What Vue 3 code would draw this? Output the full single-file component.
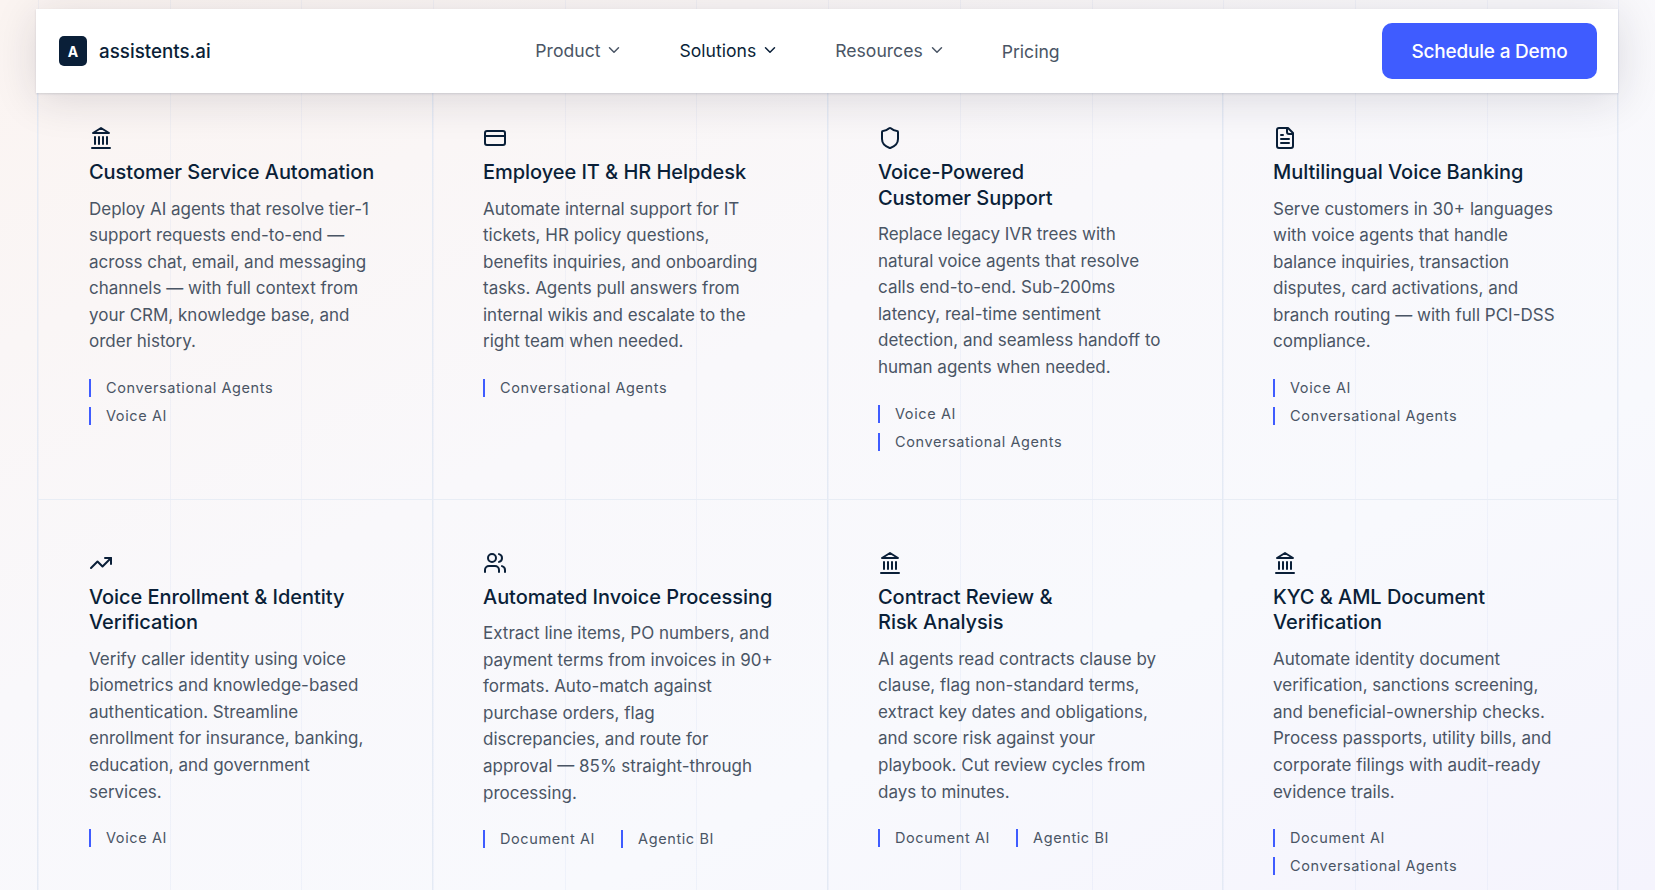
<script setup>
const nav = [
  { label: 'Product', caret: true },
  { label: 'Solutions', caret: true, active: true },
  { label: 'Resources', caret: true },
  { label: 'Pricing' },
]

const cards = [
  {
    icon: 'bank',
    title: 'Customer Service Automation',
    text: 'Deploy AI agents that resolve tier-1\nsupport requests end-to-end —\nacross chat, email, and messaging\nchannels — with full context from\nyour CRM, knowledge base, and\norder history.',
    tags: ['Conversational Agents', 'Voice AI'],
    stack: true,
  },
  {
    icon: 'card',
    title: 'Employee IT & HR Helpdesk',
    text: 'Automate internal support for IT\ntickets, HR policy questions,\nbenefits inquiries, and onboarding\ntasks. Agents pull answers from\ninternal wikis and escalate to the\nright team when needed.',
    tags: ['Conversational Agents'],
  },
  {
    icon: 'shield',
    title: 'Voice-Powered\nCustomer Support',
    text: 'Replace legacy IVR trees with\nnatural voice agents that resolve\ncalls end-to-end. Sub-200ms\nlatency, real-time sentiment\ndetection, and seamless handoff to\nhuman agents when needed.',
    tags: ['Voice AI', 'Conversational Agents'],
    stack: true,
  },
  {
    icon: 'doc',
    title: 'Multilingual Voice Banking',
    text: 'Serve customers in 30+ languages\nwith voice agents that handle\nbalance inquiries, transaction\ndisputes, card activations, and\nbranch routing — with full PCI-DSS\ncompliance.',
    tags: ['Voice AI', 'Conversational Agents'],
    stack: true,
  },
  {
    icon: 'trend',
    title: 'Voice Enrollment & Identity\nVerification',
    text: 'Verify caller identity using voice\nbiometrics and knowledge-based\nauthentication. Streamline\nenrollment for insurance, banking,\neducation, and government\nservices.',
    tags: ['Voice AI'],
  },
  {
    icon: 'users',
    title: 'Automated Invoice Processing',
    text: 'Extract line items, PO numbers, and\npayment terms from invoices in 90+\nformats. Auto-match against\npurchase orders, flag\ndiscrepancies, and route for\napproval — 85% straight-through\nprocessing.',
    tags: ['Document AI', 'Agentic BI'],
  },
  {
    icon: 'bank',
    title: 'Contract Review &\nRisk Analysis',
    text: 'AI agents read contracts clause by\nclause, flag non-standard terms,\nextract key dates and obligations,\nand score risk against your\nplaybook. Cut review cycles from\ndays to minutes.',
    tags: ['Document AI', 'Agentic BI'],
  },
  {
    icon: 'bank',
    title: 'KYC & AML Document\nVerification',
    text: 'Automate identity document\nverification, sanctions screening,\nand beneficial-ownership checks.\nProcess passports, utility bills, and\ncorporate filings with audit-ready\nevidence trails.',
    tags: ['Document AI', 'Conversational Agents'],
    stack: true,
  },
]
</script>

<template>
  <div class="page">
    <header class="nav">
      <div class="brand">
        <span class="logo">A</span>
        <span class="brandName">assistents.ai</span>
      </div>
      <nav class="links">
        <a v-for="item in nav" :key="item.label" class="link" :class="{ active: item.active, plain: !item.caret }">
          {{ item.label }}
          <svg v-if="item.caret" class="caret" viewBox="0 0 24 24" fill="none" stroke="currentColor" stroke-width="2" stroke-linecap="round" stroke-linejoin="round">
            <path d="m6 9 6 6 6-6" />
          </svg>
        </a>
      </nav>
      <button class="demo">Schedule a Demo</button>
    </header>

    <main class="grid">
      <article v-for="card in cards" :key="card.title" class="card">
        <svg class="icon" viewBox="0 0 24 24" fill="none" stroke="currentColor" stroke-width="2" stroke-linecap="round" stroke-linejoin="round">
          <template v-if="card.icon === 'bank'">
            <path d="M3 22h18M6 18v-7M10 18v-7M14 18v-7M18 18v-7M12 2l8 5H4z" />
          </template>
          <template v-else-if="card.icon === 'card'">
            <rect x="2" y="5" width="20" height="14" rx="2" />
            <path d="M2 10h20" />
          </template>
          <template v-else-if="card.icon === 'shield'">
            <path d="M20 13c0 5-3.5 7.5-7.66 8.95a1 1 0 0 1-.67-.01C7.5 20.5 4 18 4 13V6a1 1 0 0 1 1-1c2 0 4.5-1.2 6.24-2.72a1.17 1.17 0 0 1 1.52 0C14.51 3.81 17 5 19 5a1 1 0 0 1 1 1z" />
          </template>
          <template v-else-if="card.icon === 'doc'">
            <path d="M15 2H6a2 2 0 0 0-2 2v16a2 2 0 0 0 2 2h12a2 2 0 0 0 2-2V7z" />
            <path d="M14 2v4a2 2 0 0 0 2 2h4M10 9H8M16 13H8M16 17H8" />
          </template>
          <template v-else-if="card.icon === 'trend'">
            <path d="M22 7 13.5 15.5l-5-5L2 17" />
            <path d="M16 7h6v6" />
          </template>
          <template v-else>
            <path d="M16 21v-2a4 4 0 0 0-4-4H6a4 4 0 0 0-4 4v2" />
            <circle cx="9" cy="7" r="4" />
            <path d="M22 21v-2a4 4 0 0 0-3-3.87M16 3.13a4 4 0 0 1 0 7.75" />
          </template>
        </svg>
        <h3 class="title">{{ card.title }}</h3>
        <p class="text">{{ card.text }}</p>
        <div class="tags" :class="{ stack: card.stack }">
          <span v-for="tag in card.tags" :key="tag" class="tag">{{ tag }}</span>
        </div>
      </article>
    </main>
  </div>
</template>

<style>
html,
body {
  margin: 0;
  overflow: hidden;
}
</style>

<style scoped>
.page {
  position: relative;
  height: 890px;
  overflow: hidden;
  box-sizing: border-box;
  padding: 74px 37px 0;
  font-family: Inter, 'Noto Sans', sans-serif;
  color: #0a1f38;
  background:
    repeating-linear-gradient(90deg, rgba(64, 110, 200, 0.05) 0 1px, transparent 1px 131.7px) 38px 0,
    linear-gradient(155deg, #fbf4f1 0%, #f9f8fb 42%, #f8f9fd 70%, #f5f4fd 100%);
}

.nav {
  position: absolute;
  z-index: 2;
  top: 9px;
  left: 36px;
  width: 1582px;
  height: 84px;
  box-sizing: border-box;
  padding: 0 21px 0 23px;
  display: flex;
  align-items: center;
  justify-content: space-between;
  background: #fff;
  box-shadow: 0 1px 2px rgba(30, 40, 70, 0.14), 0 6px 44px rgba(30, 30, 50, 0.14);
}

.brand {
  width: 290px;
  display: flex;
  align-items: center;
  gap: 12px;
}

.logo {
  width: 28px;
  height: 30px;
  border-radius: 5px;
  background: #0a1f38;
  color: #fff;
  font-size: 14px;
  font-weight: 700;
  display: flex;
  align-items: center;
  justify-content: center;
}

.brandName {
  font-size: 18.8px;
  font-weight: 500;
  color: #0a1f38;
}

.links {
  display: flex;
  align-items: center;
  gap: 56px;
  margin-right: 136px;
  margin-bottom: 2px;
}

.link {
  display: flex;
  align-items: center;
  gap: 5px;
  font-size: 17.6px;
  color: #4a5565;
}

.link.active {
  color: #0a1f38;
}

.link.plain {
  padding-top: 2px;
}

.caret {
  width: 18px;
  height: 18px;
}

.demo {
  width: 215px;
  height: 56px;
  border: none;
  border-radius: 10px;
  background: #3f5cff;
  color: #fff;
  font-family: inherit;
  font-size: 19px;
  font-weight: 500;
  letter-spacing: -0.2px;
}

.grid {
  display: grid;
  grid-template-columns: repeat(4, 1fr);
  border-right: 1px solid #e4eaf4;
}

.card {
  box-sizing: border-box;
  padding: 51px 40px 48px 50px;
  border-top: 1px solid #e8edf5;
  border-left: 1px solid #e4eaf4;
}

.card:nth-child(4n + 1) {
  padding-left: 51px;
}

.icon {
  display: block;
  width: 24px;
  height: 24px;
  color: #0a1f38;
}

.title {
  margin: 10px 0;
  font-size: 20px;
  font-weight: 500;
  line-height: 25.5px;
  letter-spacing: -0.05px;
  color: #0a1f38;
  white-space: pre-line;
}

.text {
  margin: 0;
  font-size: 17px;
  line-height: 26.6px;
  color: #4a5565;
  white-space: pre-line;
}

.tags {
  margin-top: 24px;
  display: flex;
  flex-wrap: wrap;
  gap: 10px 26px;
}

.tags.stack {
  flex-direction: column;
}

.tag {
  border-left: 2px solid #3f5cff;
  padding-left: 15px;
  font-size: 14.5px;
  line-height: 18px;
  letter-spacing: 0.6px;
  color: #4a5565;
}
</style>
